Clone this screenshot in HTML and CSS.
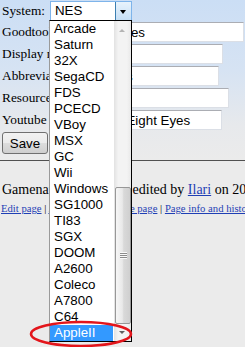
FILE: index.html
```html
<!DOCTYPE html>
<html lang="en">
<head>
    <meta charset="UTF-8">
    <title>Game resource editor</title>
    <link rel="stylesheet" href="styles.css">
</head>
<body>
    <div class="editor">
        <div class="row row-system">
            <span class="label">System:</span>
            <div class="select">
                <span class="select-value">NES</span>
                <span class="select-arrow"></span>
            </div>
        </div>
        <div class="row">
            <span class="label">Goodtool name:</span>
            <input type="text" class="field field-goodtool" value="8 Eyes">
        </div>
        <div class="row">
            <span class="label">Display name:</span>
            <input type="text" class="field field-display" value="8 Eyes">
        </div>
        <div class="row">
            <span class="label">Abbreviation:</span>
            <input type="text" class="field field-abbr" value="8eyes">
        </div>
        <div class="row">
            <span class="label">Resource name:</span>
            <input type="text" class="field field-resource" value="eyes">
        </div>
        <div class="row">
            <span class="label">Youtube name:</span>
            <input type="text" class="field field-youtube" value="Eight Eyes">
        </div>
        <div class="row row-save">
            <button class="save">Save</button>
        </div>
    </div>

    <div class="footer">
        <p class="last-edit">Gamename page – last edited by <a href="#">Ilari</a> on 2010-05-23 14:02:11</p>
        <p class="page-links"><a href="#">Edit page</a> | <a href="#">Attachments</a> | <a href="#">Move page</a> | <a href="#">Page info and history</a></p>
    </div>

    <div class="dropdown">
        <ul class="options">
            <li>Arcade</li>
            <li>Saturn</li>
            <li>32X</li>
            <li>SegaCD</li>
            <li>FDS</li>
            <li>PCECD</li>
            <li>VBoy</li>
            <li>MSX</li>
            <li>GC</li>
            <li>Wii</li>
            <li>Windows</li>
            <li>SG1000</li>
            <li>TI83</li>
            <li>SGX</li>
            <li>DOOM</li>
            <li>A2600</li>
            <li>Coleco</li>
            <li>A7800</li>
            <li>C64</li>
            <li class="selected">AppleII</li>
        </ul>
        <div class="scrollbar">
            <div class="scroll-up"></div>
            <div class="scroll-track">
                <div class="scroll-thumb"><span class="grip"></span></div>
            </div>
            <div class="scroll-down"></div>
        </div>
    </div>

    <svg class="mark" width="108" height="30" viewBox="0 0 108 30">
        <ellipse cx="52" cy="15" rx="50" ry="12" fill="none" stroke="#e3151b" stroke-width="2.5"/>
    </svg>
</body>
</html>
```

FILE: styles.css
```css
body {
    margin: 0;
    min-height: 347px;
    background-color: #ebebeb;
    font-family: "Liberation Serif", "Times New Roman", serif;
    font-size: 13.33px;
    color: #000;
    position: relative;
}

.editor {
    height: 161px;
    padding-left: 2px;
    box-sizing: border-box;
    border-bottom: 1px solid #505050;
    background: linear-gradient(to bottom, #cbdef5 0, #d6e3f3 70px, #e7e9ec 125px, #ebebeb 160px);
}

.row {
    display: flex;
    align-items: center;
    height: 22px;
    white-space: nowrap;
}

.row-system {
    height: 21px;
}

.label {
    margin-right: 4px;
}

.select {
    display: flex;
    width: 82px;
    height: 20px;
    margin-left: 1px;
    box-sizing: border-box;
    border: 1px solid #7eb4ea;
    background-color: #fff;
    font-family: "Liberation Sans", Arial, sans-serif;
    font-size: 13.33px;
}

.select-value {
    flex: 1;
    padding-left: 4px;
    line-height: 18px;
}

.select-arrow {
    width: 15px;
    border-left: 1px solid #3c7fb1;
    background: linear-gradient(to bottom, #e8f3fc, #c6dff5);
    position: relative;
}

.select-arrow::after {
    content: "";
    position: absolute;
    left: 4px;
    top: 8px;
    border-left: 3.5px solid transparent;
    border-right: 3.5px solid transparent;
    border-top: 4px solid #000;
}

.field {
    height: 20px;
    box-sizing: border-box;
    padding: 1px 2px;
    border: 1px solid #dbdfe6;
    border-top-color: #abadb3;
    background-color: #fff;
    font-family: "Liberation Sans", Arial, sans-serif;
    font-size: 13.33px;
    outline: none;
}

.field-goodtool {
    margin-left: 9px;
    width: 143px;
}

.field-display {
    margin-left: 0;
    width: 140px;
}

.field-abbr {
    margin-left: 14px;
    width: 125px;
}

.field-resource {
    margin-left: 0;
    width: 137px;
}

.field-youtube {
    margin-left: 37px;
    width: 99px;
}

.row-save {
    height: 24px;
}

.save {
    width: 46px;
    height: 22px;
    padding: 0;
    border: 1px solid #707070;
    border-radius: 3px;
    background: linear-gradient(to bottom, #f2f2f2 0, #ebebeb 50%, #dddddd 50%, #cfcfcf 100%);
    font-family: "Liberation Sans", Arial, sans-serif;
    font-size: 13.33px;
    color: #000;
}

.footer {
    padding: 20px 0 0 2px;
    white-space: nowrap;
    overflow: hidden;
}

.footer p {
    margin: 0;
}

.last-edit {
    font-size: 14px;
    line-height: 18px;
}

.footer .page-links {
    margin: 2px 0 0 -1px;
    font-size: 10.67px;
    line-height: 14px;
}

.footer a {
    color: #1f3fb5;
}

/* open system list */
.dropdown {
    position: absolute;
    left: 49px;
    top: 20px;
    width: 83px;
    height: 322px;
    box-sizing: border-box;
    display: flex;
    border: 1px solid #000;
    border-left-color: #9a9a9a;
    background-color: #fff;
    font-family: "Liberation Sans", Arial, sans-serif;
    font-size: 13.33px;
}

.options {
    flex: 1;
    margin: 0;
    padding: 0;
    list-style: none;
}

.options li {
    height: 16px;
    line-height: 16px;
    padding-left: 4px;
}

.options li.selected {
    margin-right: 1px;
    background-color: #3399ff;
    color: #fff;
}

.scrollbar {
    width: 17px;
    display: flex;
    flex-direction: column;
    background: linear-gradient(to right, #e2e2e2, #f3f3f3 25%, #f3f3f3 75%, #e9e9e9);
}

.scroll-up,
.scroll-down {
    height: 17px;
    position: relative;
}

.scroll-up::after,
.scroll-down::after {
    content: "";
    position: absolute;
    left: 5px;
    border-left: 3.5px solid transparent;
    border-right: 3.5px solid transparent;
}

.scroll-up::after {
    top: 8px;
    border-bottom: 3.5px solid #b4b4b4;
}

.scroll-down::after {
    top: 7px;
    border-top: 3.5px solid #606060;
}

.scroll-track {
    flex: 1;
    display: flex;
    flex-direction: column;
    justify-content: flex-end;
}

.scroll-thumb {
    height: 137px;
    margin: 0 0 0 1px;
    box-sizing: border-box;
    border: 1px solid #979797;
    border-radius: 2px;
    background: linear-gradient(to right, #f6f6f6, #e9e9e9 45%, #d9d9d9 55%, #cfcfcf);
    display: flex;
    align-items: center;
    justify-content: center;
}

.grip {
    width: 7px;
    height: 7px;
    background: repeating-linear-gradient(to bottom, #fafafa 0, #fafafa 1px, #8c8c8c 1px, #8c8c8c 2px);
}

.mark {
    position: absolute;
    left: 29px;
    top: 319px;
}
```
